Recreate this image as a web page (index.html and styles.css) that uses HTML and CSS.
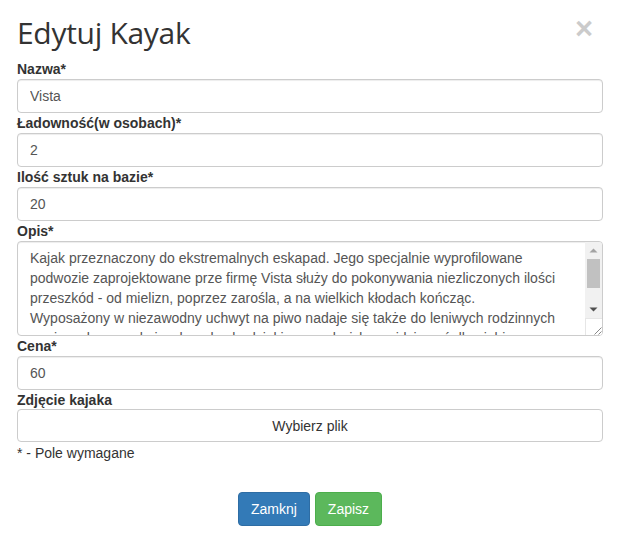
FILE: index.html
```html
<!DOCTYPE html>
<html lang="pl">
<head>
<meta charset="utf-8">
<title>Edytuj Kayak</title>
<link rel="stylesheet" href="styles.css">
</head>
<body>
<div class="modal">
  <div class="modal-header">
    <h3 class="modal-title">Edytuj Kayak</h3>
    <button type="button" class="close" aria-label="Zamknij">×</button>
  </div>
  <form class="modal-body">
    <label class="field-label" for="nazwa">Nazwa*</label>
    <input class="form-control" id="nazwa" type="text" value="Vista">
    <label class="field-label" for="lad">Ładowność(w osobach)*</label>
    <input class="form-control" id="lad" type="text" value="2">
    <label class="field-label" for="ilosc">Ilość sztuk na bazie*</label>
    <input class="form-control" id="ilosc" type="text" value="20">
    <label class="field-label" for="opis">Opis*</label>
    <div class="textarea-box">
      <textarea class="textarea" id="opis">Kajak przeznaczony do ekstremalnych eskapad. Jego specjalnie wyprofilowane
podwozie zaprojektowane prze firmę Vista służy do pokonywania niezliczonych ilości
przeszkód - od mielizn, poprzez zarośla, a na wielkich kłodach kończąc.
Wyposażony w niezawodny uchwyt na piwo nadaje się także do leniwych rodzinnych
wycieczek po spokojnych rzekach, dzięki czemu każdy znajdzie coś dla siebie.
Idealny wybór dla każdego miłośnika przygód na wodzie.</textarea>
      <div class="scrollbar" aria-hidden="true">
        <div class="sb-btn">
          <svg width="17" height="17" viewBox="0 0 17 17"><polygon points="4.5,10.5 12.5,10.5 8.5,6.5" fill="#a3a3a3"/></svg>
        </div>
        <div class="sb-track"><div class="sb-thumb"></div></div>
        <div class="sb-btn">
          <svg width="17" height="17" viewBox="0 0 17 17"><polygon points="4.5,6.5 12.5,6.5 8.5,10.5" fill="#505050"/></svg>
        </div>
        <div class="sb-corner">
          <svg width="17" height="17" viewBox="0 0 17 17"><path d="M15.5 8.5 L8.5 15.5 M15.5 12.5 L12.5 15.5" stroke="#888" stroke-width="1"/></svg>
        </div>
      </div>
    </div>
    <label class="field-label" for="cena">Cena*</label>
    <input class="form-control" id="cena" type="text" value="60">
    <label class="field-label">Zdjęcie kajaka</label>
    <div class="file-btn">Wybierz plik</div>
    <p class="required-note">* - Pole wymagane</p>
  </form>
  <div class="modal-footer">
    <button type="button" class="btn btn-primary">Zamknj</button>
    <button type="button" class="btn btn-success">Zapisz</button>
  </div>
</div>
</body>
</html>
```
FILE: styles.css
```css
html, body {
  margin: 0;
  padding: 0;
  background: #fff;
}
body {
  font-family: "Liberation Sans", Arial, sans-serif;
  font-size: 14px;
  line-height: 20px;
  color: #333;
}
.modal {
  width: 617px;
  height: 533px;
  box-sizing: border-box;
  padding: 0 14px 0 17px;
  display: flex;
  flex-direction: column;
}
.modal-header {
  height: 59px;
  display: flex;
  align-items: flex-start;
  justify-content: space-between;
}
.modal-title {
  margin: 15px 0 0 0;
  font-family: "Open Sans", "Noto Sans", sans-serif;
  font-weight: 400;
  font-size: 30px;
  line-height: 36px;
  color: #333;
  letter-spacing: -0.3px;
}
.close {
  margin: 14px 10px 0 0;
  padding: 0;
  border: 0;
  background: transparent;
  font-family: "Liberation Sans", Arial, sans-serif;
  font-size: 31px;
  font-weight: 700;
  line-height: 30px;
  color: #000;
  opacity: 0.2;
  text-shadow: 0 1px 0 #fff;
  cursor: pointer;
}
.modal-body {
  display: flex;
  flex-direction: column;
  margin: 0;
}
.field-label {
  font-weight: 700;
  line-height: 20px;
  height: 20px;
}
.form-control {
  display: block;
  box-sizing: border-box;
  width: 100%;
  height: 34px;
  margin: 0;
  padding: 6px 12px;
  font-family: "Liberation Sans", Arial, sans-serif;
  font-size: 14px;
  line-height: 20px;
  color: #555;
  background: #fff;
  border: 1px solid #ccc;
  border-radius: 4px;
  box-shadow: inset 0 1px 1px rgba(0,0,0,.075);
  outline: none;
}
.textarea-box {
  display: flex;
  box-sizing: border-box;
  height: 95px;
  border: 1px solid #ccc;
  border-radius: 4px;
  overflow: hidden;
  box-shadow: inset 0 1px 1px rgba(0,0,0,.075);
}
.textarea {
  flex: 1;
  min-width: 0;
  margin: 0;
  padding: 6px 12px;
  border: 0;
  outline: none;
  resize: none;
  overflow: hidden;
  white-space: pre;
  background: transparent;
  font-family: "Liberation Sans", Arial, sans-serif;
  font-size: 14px;
  line-height: 20px;
  color: #555;
}
.scrollbar {
  width: 17px;
  flex: none;
  display: flex;
  flex-direction: column;
  background: #f1f1f1;
}
.sb-btn {
  height: 17px;
  flex: none;
}
.sb-btn svg, .sb-corner svg {
  display: block;
}
.sb-track {
  flex: 1;
  padding: 0 2px;
}
.sb-thumb {
  height: 29px;
  background: #c1c1c1;
}
.sb-corner {
  height: 17px;
  flex: none;
  background: #fff;
  border-top: 1px solid #e6e6e6;
  border-left: 1px solid #e6e6e6;
  box-sizing: border-box;
}
.file-btn {
  box-sizing: border-box;
  height: 33px;
  margin-top: -1px;
  border: 1px solid #ccc;
  border-radius: 4px;
  display: flex;
  align-items: center;
  justify-content: center;
  color: #333;
}
.required-note {
  margin: 0;
  line-height: 20px;
  padding-top: 1px;
}
.modal-footer {
  display: flex;
  justify-content: center;
  gap: 5px;
  margin-top: 29px;
}
.btn {
  box-sizing: border-box;
  height: 34px;
  padding: 6px 12px;
  font-family: "Liberation Sans", Arial, sans-serif;
  font-size: 14px;
  line-height: 20px;
  color: #fff;
  border: 1px solid transparent;
  border-radius: 4px;
  cursor: pointer;
}
.btn-primary {
  background: #337ab7;
  border-color: #2e6da4;
}
.btn-success {
  background: #5cb85c;
  border-color: #4cae4c;
}
```
